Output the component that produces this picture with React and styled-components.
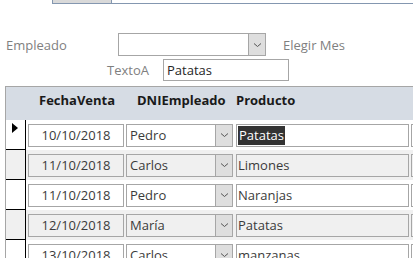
import styled, { createGlobalStyle } from "styled-components";

const GlobalStyle = createGlobalStyle`
    body {
        margin: 0;
        background: #fff;
        font-family: "Open Sans", "Noto Sans", sans-serif;
        font-size: 13px;
        color: #3b3b3b;
        overflow: hidden;
    }
`

const rows = [
    { fecha: "10/10/2018", dni: "Pedro", producto: "Patatas", selected: true },
    { fecha: "11/10/2018", dni: "Carlos", producto: "Limones" },
    { fecha: "11/10/2018", dni: "Pedro", producto: "Naranjas" },
    { fecha: "12/10/2018", dni: "María", producto: "Patatas" },
    { fecha: "13/10/2018", dni: "Carlos", producto: "manzanas" },
]

const Chevron = () => (
    <svg width="9" height="6" viewBox="0 0 9 6">
        <path d="M1 1.5 L4.5 4.5 L8 1.5" fill="none" stroke="#555" strokeWidth="1" />
    </svg>
)

const App = () => {
    return (
        <>
            <GlobalStyle />
            <Page>
                <TabStrip>
                    <Tab />
                    <TabLine />
                </TabStrip>

                <Filters>
                    <FilterRow>
                        <Label>Empleado</Label>
                        <Combo width="148px">
                            <ComboText />
                            <DropButton><Chevron /></DropButton>
                        </Combo>
                        <Label>Elegir Mes</Label>
                    </FilterRow>
                    <FilterRow second>
                        <Label>TextoA</Label>
                        <TextBox>Patatas</TextBox>
                    </FilterRow>
                </Filters>

                <Grid>
                    <HeaderRow>
                        <HeadCell>FechaVenta</HeadCell>
                        <HeadCell>DNIEmpleado</HeadCell>
                        <HeadCell>Producto</HeadCell>
                    </HeaderRow>
                    {rows.map((r, i) => (
                        <Row key={i} alt={i % 2 === 1}>
                            <Selector>{r.selected && <Arrow />}</Selector>
                            <DateBox alt={i % 2 === 1}>{r.fecha}</DateBox>
                            <Combo width="107px" alt={i % 2 === 1}>
                                <ComboText>{r.dni}</ComboText>
                                <DropButton><Chevron /></DropButton>
                            </Combo>
                            <Field alt={i % 2 === 1}>
                                {r.selected ? <Selected>{r.producto}</Selected> : r.producto}
                            </Field>
                            <Field alt={i % 2 === 1} />
                        </Row>
                    ))}
                </Grid>
            </Page>
        </>
    )
}

const Page = styled.div`
    width: 413px;
    height: 258px;
    overflow: hidden;
`

const TabStrip = styled.div`
    display: flex;
    align-items: flex-end;
    height: 4px;
    padding-left: 52px;
`

const Tab = styled.div`
    width: 58px;
    height: 3px;
    background: #d9d9d9;
    border: 1px solid #8497b0;
    border-top: 0;
`

const TabLine = styled.div`
    flex: 1;
    height: 1px;
    background: #8497b0;
`

const Filters = styled.div`
    display: flex;
    flex-direction: column;
    gap: 4px;
    padding-top: 29px;
    height: 53px;
`

const FilterRow = styled.div`
    display: grid;
    grid-template-columns: ${p => p.second ? "143px 126px" : "95px 148px auto"};
    column-gap: ${p => p.second ? "14px" : "17px"};
    align-items: center;
    padding-left: 6px;
    height: 22px;

    & > span:first-child {
        text-align: ${p => p.second ? "right" : "left"};
    }
`

const Label = styled.span`
    color: #7f7f7f;
    font-size: 13px;
    white-space: nowrap;
`

const Combo = styled.div`
    display: flex;
    box-sizing: border-box;
    width: ${p => p.width};
    height: 23px;
    border: 1px solid #a6a6a6;
    background: ${p => p.alt ? "#f0f0f0" : "#fff"};
`

const ComboText = styled.div`
    flex: 1;
    padding-left: 3px;
    line-height: 21px;
    color: #3b3b3b;
    overflow: hidden;
`

const DropButton = styled.div`
    width: 16px;
    display: flex;
    align-items: center;
    justify-content: center;
    background: #dedede;
    border-left: 1px solid #a6a6a6;
`

const TextBox = styled.div`
    box-sizing: border-box;
    height: 22px;
    border: 1px solid #a6a6a6;
    padding-left: 3px;
    line-height: 20px;
    color: #262626;
`

const Grid = styled.div`
    margin-left: 5px;
    border-top: 1px solid #a6a6a6;
    border-left: 1px solid #a6a6a6;
`

const HeaderRow = styled.div`
    display: grid;
    grid-template-columns: 98px 99px auto;
    padding: 4px 0 0 33px;
    box-sizing: border-box;
    height: 33px;
    align-items: start;
    background: #d6dce4;
`

const HeadCell = styled.div`
    font-weight: 700;
    color: #1a1a1a;
    font-size: 13px;
    white-space: nowrap;
`

const Row = styled.div`
    display: grid;
    grid-template-columns: 20px 96px 108px 173px 10px;
    column-gap: 2px;
    align-items: center;
    height: 30px;
    background: ${p => p.alt ? "#f0f0f0" : "#fff"};
`

const Selector = styled.div`
    box-sizing: border-box;
    align-self: stretch;
    border-right: 1px solid #000;
    border-bottom: 1px solid #000;
    position: relative;
`

const Arrow = styled.div`
    position: absolute;
    left: 6px;
    top: 3px;
    width: 0;
    height: 0;
    border-top: 5px solid transparent;
    border-bottom: 5px solid transparent;
    border-left: 6px solid #000;
`

const DateBox = styled.div`
    box-sizing: border-box;
    height: 23px;
    border: 1px solid #a6a6a6;
    background: ${p => p.alt ? "#f0f0f0" : "#fff"};
    text-align: center;
    line-height: 21px;
`

const Field = styled.div`
    box-sizing: border-box;
    height: 23px;
    border: 1px solid #a6a6a6;
    background: ${p => p.alt ? "#f0f0f0" : "#fff"};
    padding-left: 1px;
    line-height: 21px;
    white-space: nowrap;
    overflow: hidden;
`

const Selected = styled.span`
    display: inline-block;
    background: #333;
    color: #fff;
    padding: 0 1px;
    line-height: 19px;
    margin-top: 1px;
`

export default App
